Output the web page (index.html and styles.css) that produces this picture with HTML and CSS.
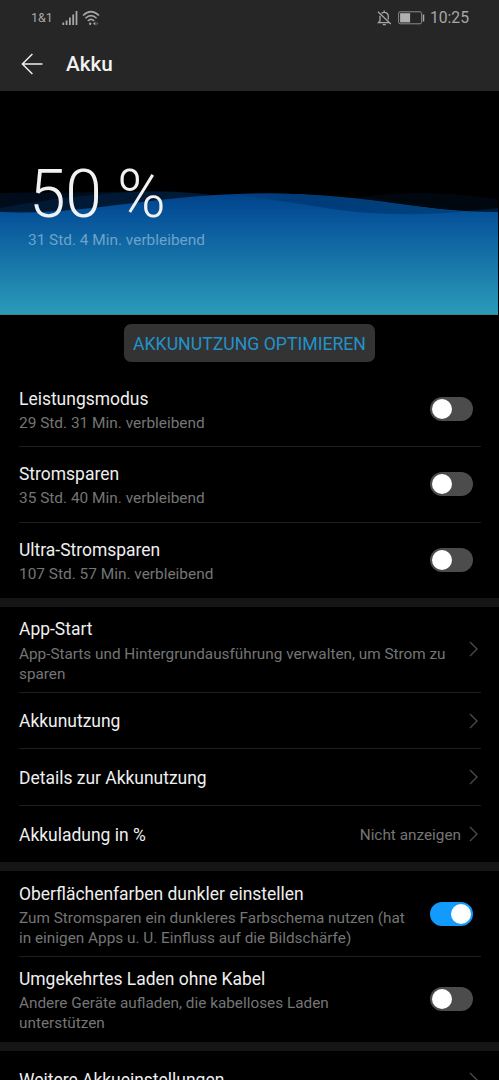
FILE: index.html
```html
<!DOCTYPE html>
<html lang="de">
<head>
<meta charset="utf-8">
<title>Akku</title>
<link rel="stylesheet" href="styles.css">
</head>
<body>
<div class="screen">
  <header class="header">
    <div class="status">
      <span class="carrier">1&amp;1</span>
      <svg class="signal" width="16" height="16" viewBox="0 0 16 16" stroke="#a6a6a6" stroke-width="1.8"><path d="M1.3 12.5V15M4.6 10.5V15M7.9 7.5V15M11.2 4.5V15M14.5 1V15"/></svg>
      <svg class="wifi" width="18" height="16" viewBox="0 0 18 16" fill="none" stroke="#a6a6a6" stroke-width="1.6"><path d="M1 5.5Q9-2.2 17 5.5M3.4 8.3Q9 2.8 14.6 8.3M5.8 11Q9 7.8 12.2 11"/><circle cx="8.2" cy="13.7" r="1.2" fill="#a6a6a6" stroke="none"/><path d="M13.4 11.8L11 13.6L13.4 15.4Z" fill="#a6a6a6" stroke="none"/><path d="M14.5 11.8L16.5 13.6L14.5 15.4Z" fill="#5c5c5c" stroke="none"/></svg>
      <svg class="bell" width="15" height="16" viewBox="0 0 15 16" fill="none" stroke="#a6a6a6" stroke-width="1.3"><path d="M4.6 3.4C5.2 2.7 6 2.3 7.2 2.3C9.8 2.3 11.3 4 11.3 6.6V9.5M3 5.7V11L1.5 12.7H12M1 1.8L13.8 14M7.2 .6V2.3"/><path d="M5.8 14.6H8.8"/></svg>
      <svg class="battery" width="27" height="14" viewBox="0 0 27 14"><rect x=".6" y=".8" width="23" height="12" rx="1.5" fill="none" stroke="#8b8b8b"/><rect x="2.1" y="2.2" width="10" height="9.2" fill="#b0b0b0"/><path d="M25.5 3.5V10.5" stroke="#a6a6a6" stroke-width="1.5"/></svg>
      <span class="clock">10:25</span>
    </div>
    <div class="titlebar">
      <svg width="22" height="22" viewBox="0 0 22 22" fill="none" stroke="#eee" stroke-width="1.5"><path d="M11.4 1L1.4 11L11.4 21M1.4 11H21.5"/></svg>
      <h1 class="title">Akku</h1>
    </div>
  </header>
  <section class="hero">
    <svg class="waves" width="498" height="224" viewBox="0 0 498 224">
      <defs>
        <linearGradient id="water" x1="0" y1="103" x2="0" y2="224" gradientUnits="userSpaceOnUse"><stop offset="0" stop-color="#00438a"/><stop offset=".18" stop-color="#06539a"/><stop offset="1" stop-color="#2b9cb9"/></linearGradient>
        <linearGradient id="crest" x1="200" y1="0" x2="470" y2="0" gradientUnits="userSpaceOnUse"><stop offset="0" stop-color="#003b7c" stop-opacity="0"/><stop offset=".35" stop-color="#003a78"/><stop offset="1" stop-color="#004480"/></linearGradient>
      </defs>
      <path d="M0 102C30 101 60 102 100 101C150 100 185 100 220 106V130H0Z" fill="#000c1a"/>
      <path d="M340 110C370 103 400 102 425 102C455 102 480 106 498 108V130H340Z" fill="#00070f"/>
      <path d="M0 117C45 109 105 100 165 100.500C190 101 210 104 235 107V130H0Z" fill="#001a36"/>
      <path d="M450 122C470 120 485 118 498 117V130H450Z" fill="#001a36"/>
      <path d="M0 121C90 125 155 102 270 102.500C355 102.500 430 122 498 121V224H0Z" fill="url(#water)"/>
      <path d="M215 104C235 103 250 102.500 270 102.500C355 102.500 420 118 465 120.500C420 125 365 124 320 116C280 110 245 104 215 104Z" fill="url(#crest)"/>
      <path d="M0 223.500H498" stroke="#467d88"/>
    </svg>
    <div class="reading"><div class="percent">50 %</div><div class="remaining">31 Std. 4 Min. verbleibend</div></div>
  </section>
  <div class="action"><button class="optimize">AKKUNUTZUNG OPTIMIEREN</button></div>
  <section class="group">
    <div class="row mode first"><div class="text"><div class="name">Leistungsmodus</div><div class="sub">29 Std. 31 Min. verbleibend</div></div><span class="switch"></span></div>
    <div class="row mode"><div class="text"><div class="name">Stromsparen</div><div class="sub">35 Std. 40 Min. verbleibend</div></div><span class="switch"></span></div>
    <div class="row mode"><div class="text"><div class="name">Ultra-Stromsparen</div><div class="sub">107 Std. 57 Min. verbleibend</div></div><span class="switch"></span></div>
  </section>
  <section class="group">
    <div class="row detail"><div class="text"><div class="name">App-Start</div><div class="sub">App-Starts und Hintergrundausführung verwalten, um Strom zu<br>sparen</div></div><svg class="chevron" width="10" height="16" viewBox="0 0 10 16"><path d="M1 1L8 8L1 15"/></svg></div>
    <div class="row single short"><div class="name">Akkunutzung</div><svg class="chevron" width="10" height="16" viewBox="0 0 10 16"><path d="M1 1L8 8L1 15"/></svg></div>
    <div class="row single"><div class="name">Details zur Akkunutzung</div><svg class="chevron" width="10" height="16" viewBox="0 0 10 16"><path d="M1 1L8 8L1 15"/></svg></div>
    <div class="row single"><div class="name">Akkuladung in %</div><span class="value">Nicht anzeigen</span><svg class="chevron" width="10" height="16" viewBox="0 0 10 16"><path d="M1 1L8 8L1 15"/></svg></div>
  </section>
  <section class="group">
    <div class="row dark"><div class="text"><div class="name">Oberflächenfarben dunkler einstellen</div><div class="sub">Zum Stromsparen ein dunkleres Farbschema nutzen (hat<br>in einigen Apps u. U. Einfluss auf die Bildschärfe)</div></div><span class="switch on"></span></div>
    <div class="row reverse"><div class="text"><div class="name">Umgekehrtes Laden ohne Kabel</div><div class="sub">Andere Geräte aufladen, die kabelloses Laden<br>unterstützen</div></div><span class="switch"></span></div>
  </section>
  <section class="group">
    <div class="row single last"><div class="name">Weitere Akkueinstellungen</div><svg class="chevron" width="10" height="16" viewBox="0 0 10 16"><path d="M1 1L8 8L1 15"/></svg></div>
  </section>
</div>
</body>
</html>
```
FILE: styles.css
```css
* { box-sizing: border-box; }
body { margin: 0; background: #000; font-family: Roboto, sans-serif; overflow: hidden; }
.screen { width: 499px; height: 1080px; overflow: hidden; display: flex; flex-direction: column; }
.screen > * { flex-shrink: 0; }
.header { height: 91px; background: #262626; }
.status { height: 36px; display: flex; align-items: center; padding: 0 30px 0 31px; color: #a6a6a6; }
.carrier { font-size: 12.5px; line-height: 16px; width: 31px; }
.wifi { margin-left: 4px; }
.bell { margin-left: auto; }
.battery { margin-left: 6px; }
.clock { font-size: 15.7px; line-height: 18px; margin-left: 5px; }
.titlebar { height: 55px; display: flex; align-items: center; padding-left: 21px; gap: 23px; }
.title { margin: 0; font-size: 20.7px; line-height: 28px; font-weight: 500; color: #f2f2f2; }
.hero { height: 224px; display: grid; }
.hero > * { grid-area: 1 / 1; }
.reading { padding: 69px 0 0 28px; z-index: 1; }
.percent { height: 70px; line-height: 70px; padding-left: 1px; font-size: 66px; letter-spacing: -0.4px; font-weight: 300; color: #f2f2f2; }
.remaining { font-size: 15.4px; line-height: 20px; color: #6ca3cb; }
.action { height: 56px; padding-top: 9px; text-align: center; }
.optimize { display: inline-block; width: 251px; height: 38px; padding: 2px 0 0; border: 0; border-radius: 7px; background: #333; color: #2492c9; font: 17.65px/36px Roboto, sans-serif; white-space: nowrap; }
.group + .group { border-top: 9px solid #151515; }
.row { display: flex; align-items: center; margin: 0 18px 0 19px; }
.row + .row { background: linear-gradient(#1f1f1f, #1f1f1f) 0 0 / 100% 1px no-repeat; }
.text { align-self: flex-start; }
.name { font-size: 17.47px; line-height: 24px; color: #efefef; white-space: nowrap; }
.sub { margin-top: 2px; font-size: 15.33px; line-height: 20px; color: #757575; white-space: nowrap; }
.mode { height: 76px; padding-top: 16px; }
.mode .sub { font-size: 15.42px; }
.mode.first { height: 75px; }
.detail { height: 85px; padding-top: 10px; }
.detail .sub { margin-top: 3px; font-size: 15.3px; }
.single { height: 57px; padding-top: 1px; }
.single .name, .value { margin-top: 1px; }
.single.short { height: 56px; }
.single.last { padding-top: 0; }
.single.last .name { margin-top: 0; }
.dark { height: 85px; padding-top: 11px; }
.reverse { height: 86px; padding-top: 11px; }
.switch { margin-left: auto; margin-right: 8px; width: 43px; height: 24px; padding: 2px; border-radius: 12px; background: #4c4c4c; display: flex; flex-shrink: 0; align-self: flex-start; }
.mode .switch { margin-top: 10px; }
.dark .switch { margin-top: 20px; }
.reverse .switch { margin-top: 20px; }
.switch::before { content: ""; width: 20px; height: 20px; border-radius: 50%; background: #fff; }
.switch.on { background: #129bfc; justify-content: flex-end; }
.chevron { margin-left: auto; margin-right: 2px; fill: none; stroke: #4a4a4a; stroke-width: 1.4; flex-shrink: 0; }
.detail .chevron { margin-top: -11px; }
.value { margin-left: auto; margin-right: 8px; font-size: 15.33px; color: #757575; }
.value + .chevron { margin-left: 0; }
```
